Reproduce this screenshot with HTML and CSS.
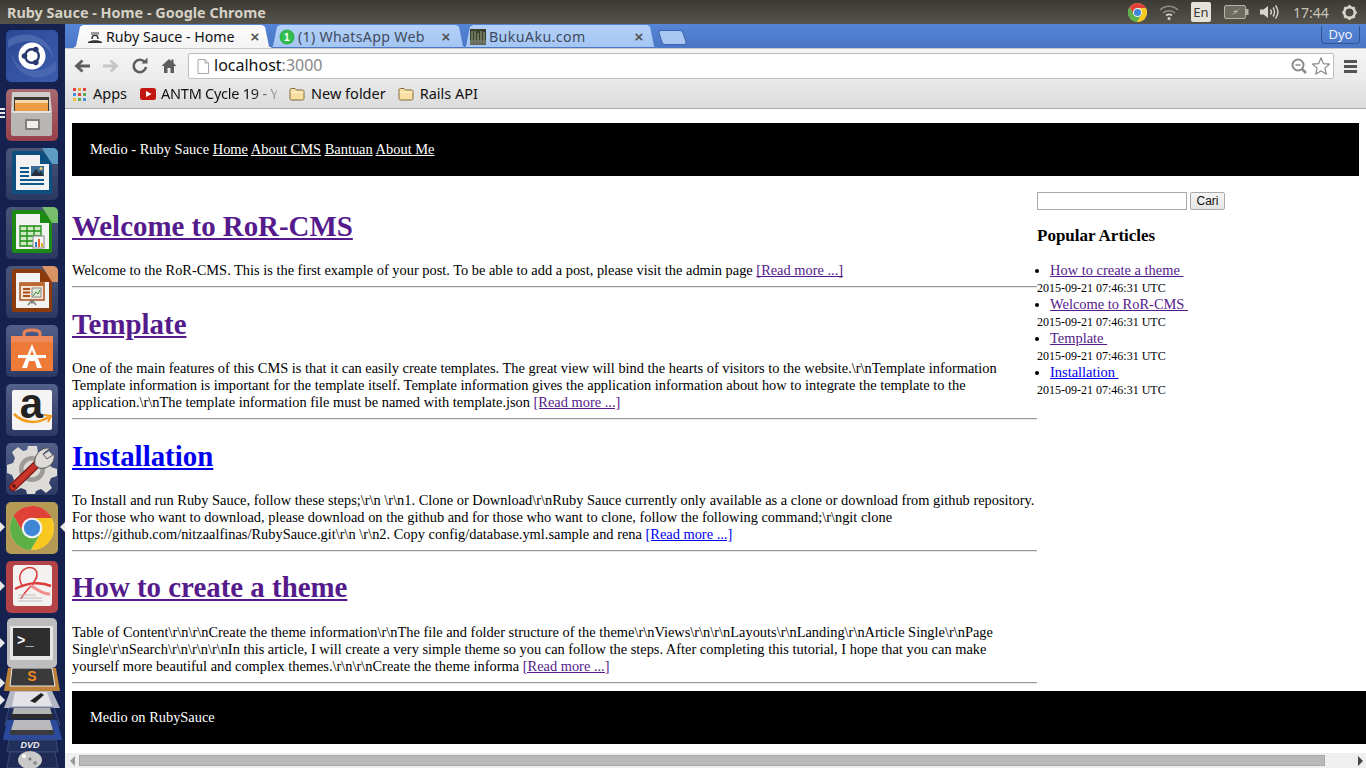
FILE: index.html
```html
<!DOCTYPE html>
<html lang="en">
<head>
<meta charset="utf-8">
<title>Ruby Sauce - Home</title>
<link rel="stylesheet" href="styles.css">
</head>
<body>
<svg class="sprite" aria-hidden="true">
  <symbol id="chrome" viewBox="-1 -1 2 2">
    <circle r="1" fill="#e0e0e0"/>
    <path fill="#df4138" d="M.893-.45A1 1 0 0 0-.836-.548L-.39.225 0-.45Z"/>
    <path fill="#f8c81e" d="M.893-.45A1 1 0 0 1-.057.998L.39.225 0-.45Z"/>
    <path fill="#5cb046" d="M-.057.998A1 1 0 0 1-.836-.548L-.39.225H.39Z"/>
    <circle r=".47" fill="#f4f4f4"/>
    <circle r=".37" fill="#3f86d6"/>
  </symbol>
  <symbol id="folder" viewBox="0 0 16 14">
    <path d="M1 3.200C1 2 1.600 1.500 2.600 1.500H6L7.400 3H13.600C14.500 3 15 3.600 15 4.400V11.600C15 12.500 14.500 13 13.600 13H2.400C1.500 13 1 12.500 1 11.600Z" fill="#f9dfa2" stroke="#7f6a3c"/>
    <path d="M1.600 5.200H14.400" stroke="#fff3cf"/>
  </symbol>
</svg>

<header class="panel">
  <span class="panel-title">Ruby Sauce - Home - Google Chrome</span>
  <div class="indicators">
    <svg class="ind-chrome"><use href="#chrome"/></svg>
    <svg class="ind-wifi" viewBox="0 0 20 16"><g fill="none" stroke="#8f8c83" stroke-width="1.600"><path d="M1 6C6 1 14 1 19 6"/><path d="M4 9C7.500 6 12.500 6 16 9"/></g><path d="M7 11.500C9 10 11 10 13 11.500" fill="none" stroke="#d8d5cc" stroke-width="1.600"/><circle cx="10" cy="14.500" r="1.500" fill="#d8d5cc"/></svg>
    <span class="ind-lang">En</span>
    <svg class="ind-batt" viewBox="0 0 25 14"><rect x=".5" y=".5" width="21" height="13" rx="1.500" fill="#6d6a61" stroke="#b5b2a8"/><rect x="22" y="4" width="2.500" height="6" fill="#b5b2a8"/><path d="M17 3 9 7H12L6 11 14 6.500H11Z" fill="#ecE9e0"/></svg>
    <svg class="ind-vol" viewBox="0 0 20 16"><path d="M0 5.500H3.500L8 2V14L3.500 10.500H0Z" fill="#d8d5cc"/><g fill="none" stroke="#d8d5cc" stroke-width="1.400"><path d="M10.500 5.500C11.500 7 11.500 9 10.500 10.500"/><path d="M13 3.500C15 6 15 10 13 12.500"/><path d="M15.500 1.500C18.500 5.500 18.500 10.500 15.500 14.500"/></g></svg>
    <span class="ind-time">17:44</span>
    <svg class="ind-gear" viewBox="0 0 16 16"><circle cx="8" cy="8" r="5" fill="none" stroke="#d8d5cc" stroke-width="2.400"/><path d="M8 1V15M1 8H15M3 3 13 13M3 13 13 3" stroke="#d8d5cc" stroke-width="2" stroke-dasharray="3 8"/><circle cx="8" cy="8" r="2.800" fill="#4c4a43"/></svg>
  </div>
</header>

<div class="desktop">
  <nav class="launcher">
    <div class="tile tile-bfb">
      <svg viewBox="0 0 52 52"><path d="M2 10C18-2 46 6 48 30 44 14 22 4 2 18Z" fill="#5f7cbd" opacity=".55"/><path d="M50 40C36 54 8 48 5 22 10 40 30 48 50 32Z" fill="#5f7cbd" opacity=".45"/><circle cx="26" cy="26" r="13.500" fill="#fff"/><circle cx="26" cy="26" r="6.800" fill="none" stroke="#27396f" stroke-width="2.400"/><circle cx="18.500" cy="26" r="2.800" fill="#27396f"/><circle cx="29.800" cy="19.500" r="2.800" fill="#27396f"/><circle cx="29.800" cy="32.500" r="2.800" fill="#27396f"/></svg>
    </div>
    <div class="tile tile-files">
      <span class="pip-stack"><i></i><i></i><i></i></span>
      <svg viewBox="0 0 52 52"><path d="M6 3H44L46 23H5Z" fill="#cfcdc9"/><rect x="8" y="8" width="35" height="16" fill="#3b3835"/><rect x="9" y="11" width="33" height="4" fill="#f7d7a6"/><rect x="9" y="14" width="33" height="8" fill="#ed9c45"/><path d="M5 22H46V45C46 46 45 47 44 47H7C6 47 5 46 5 45Z" fill="#b9b7b3"/><path d="M5 22H46L44 24H7Z" fill="#e4e2de"/><rect x="19" y="30" width="15" height="11" rx="1" fill="#7f7d7a"/><rect x="21" y="32" width="11" height="7" fill="#efeeec"/></svg>
    </div>
    <div class="tile tile-office">
      <svg viewBox="0 0 52 52"><path d="M6 5Q6 3 8 3H36L46 13V44Q46 46 44 46H8Q6 46 6 44Z" fill="#0d4f7e"/><path d="M36 0 52 0V16H46Z" fill="#62a4cc" opacity=".9"/><path d="M10 7H34V16H43V42H10Z" fill="#f2f2f2"/><g fill="#10598c"><rect x="14" y="19" width="9" height="2"/><rect x="14" y="23" width="9" height="2"/><rect x="14" y="27" width="9" height="2"/><rect x="14" y="31" width="24" height="2"/><rect x="14" y="35" width="24" height="2"/></g><rect x="25" y="18" width="13" height="10" fill="#3b6d97"/><path d="M25 28 30 21 33 25 35 23 38 28Z" fill="#26303a"/><circle cx="35" cy="20.500" r="1.500" fill="#f0d060"/></svg>
    </div>
    <div class="tile tile-office">
      <svg viewBox="0 0 52 52"><path d="M6 5Q6 3 8 3H36L46 13V44Q46 46 44 46H8Q6 46 6 44Z" fill="#1d8a14"/><path d="M36 0 52 0V16H46Z" fill="#7ccb6c" opacity=".9"/><path d="M10 7H34V16H43V42H10Z" fill="#f2f2f2"/><rect x="14" y="19" width="21" height="20" fill="#cdeac4"/><path d="M14 19H35V39H14ZM14 24H35M14 29H35M14 34H35M21 19V39M28 19V39" fill="none" stroke="#1d8a14" stroke-width="1.300"/><rect x="27" y="29" width="11" height="12" fill="#f3f3f3" stroke="#888"/><rect x="29" y="35" width="2" height="5" fill="#2d79c7"/><rect x="32" y="32" width="2" height="8" fill="#e8662a"/><rect x="35" y="36" width="2" height="4" fill="#e0b020"/></svg>
    </div>
    <div class="tile tile-office">
      <svg viewBox="0 0 52 52"><path d="M6 5Q6 3 8 3H36L46 13V44Q46 46 44 46H8Q6 46 6 44Z" fill="#8d3a0d"/><path d="M36 0 52 0V16H46Z" fill="#e99a63" opacity=".9"/><path d="M10 7H34V16H43V42H10Z" fill="#f2f2f2"/><rect x="14" y="17" width="24" height="17" fill="#f5e3d3" stroke="#a8501c" stroke-width="1.500"/><rect x="14" y="17" width="24" height="3" fill="#bd6a30"/><g fill="#a8501c"><rect x="17" y="22" width="7" height="2"/><rect x="17" y="25.500" width="7" height="2"/><rect x="17" y="29" width="7" height="2"/></g><rect x="26" y="22" width="9" height="9" fill="#dfe6d8" stroke="#666" stroke-width=".7"/><path d="M27 30 30 26 32 28 34 24" stroke="#2f8f2f" fill="none"/><path d="M26 34 22 39M26 34V38M26 34 30 39" stroke="#777" stroke-width="1.300"/></svg>
    </div>
    <div class="tile tile-plain">
      <svg viewBox="0 0 52 52"><path d="M18 15V8C18 4 34 4 34 8V15" fill="none" stroke="#e98457" stroke-width="3"/><path d="M5 11H47V46H5Z" fill="#ee7a3a"/><path d="M5 11H47V17H5Z" fill="#f0895a"/><path d="M26 19 36 43H31L29 36H23L21 43H16Z" fill="#fff"/><path d="M12 30H40V33H12Z" fill="#fff"/><path d="M26 25 24 30H28Z" fill="#ee7a3a"/></svg>
    </div>
    <div class="tile tile-plain">
      <svg viewBox="0 0 52 52"><rect x="6" y="6" width="40" height="40" rx="2" fill="#f5f4f2"/><text x="25.500" y="34" class="amazon-a">a</text><path d="M8 30C18 40 32 40 43 33" fill="none" stroke="#f39a1c" stroke-width="2.500"/><path d="M38 31 45 32 42 38" fill="none" stroke="#f39a1c" stroke-width="2"/></svg>
    </div>
    <div class="tile tile-plain">
      <svg viewBox="0 0 52 52"><path d="M22 3H31L32 10 37 12 43 8 48 14 43 19 45 24 51 26V33L45 35 43 40 46 45 40 50 35 46 30 48 29 51H21L20 47 15 45 9 48 4 42 8 37 6 32 1 30V22L7 20 9 15 6 9 12 4 17 8 21 7Z" fill="#dcdbd7"/><circle cx="26" cy="26" r="13" fill="#9c9b98"/><circle cx="26" cy="26" r="8.500" fill="#dcdbd7"/><path d="M7 44 32 20" stroke="#7c1a14" stroke-width="8" stroke-linecap="round"/><path d="M7 44 32 20" stroke="#c9342b" stroke-width="5.500" stroke-linecap="round"/><path d="M29 22C27 12 35 4 44 5L37 11 41 16 48 11C50 20 41 27 33 25Z" fill="#dedcd8" stroke="#555" stroke-width="1"/><circle cx="8" cy="43" r="1.800" fill="#5b1410"/></svg>
    </div>
    <div class="tile tile-chrome">
      <span class="pip pip-left"></span><span class="pip pip-right"></span>
      <svg viewBox="0 0 52 52"><use href="#chrome" x="4" y="4" width="44" height="44"/></svg>
    </div>
    <div class="tile tile-pdf">
      <span class="pip pip-left"></span>
      <svg viewBox="0 0 52 52"><rect x="7" y="4" width="39" height="41" rx="3" fill="#f3f2f0"/><g fill="none" stroke="#d93a3a"><path d="M17 26C5 8 30 0 31 13 32 21 18 30 15 38" stroke-width="1.500"/><path d="M9 28C22 21 36 21 45 25" stroke-width="2.500"/><path d="M24 24C30 28 38 34 44 33" stroke-width="3" stroke="#f08c8c"/></g><g stroke="#bdbdbd"><path d="M12 34H30M12 37H36M12 40H36"/></g></svg>
    </div>
    <div class="tile tile-term">
      <span class="pip pip-left"></span>
      <svg viewBox="0 0 52 50"><rect x="1" y="0" width="50" height="50" rx="5" fill="#bdbdbd"/><rect x="4" y="8" width="43" height="34" rx="1" fill="#e6e6e6"/><rect x="7" y="10" width="37" height="28" fill="#2e2e2e"/><text x="11" y="27" class="prompt">&gt;_</text></svg>
    </div>
    <div class="fold">
      <span class="pip pip-left pip-a"></span><span class="pip pip-left pip-b"></span>
      <svg viewBox="0 0 65 100">
        <path d="M8 0H56L60 23H4Z" fill="#bd8238"/>
        <path d="M12 0H52L55 18H10Z" fill="#3a3a3a" stroke="#e8e8e8"/>
        <text x="32" y="13" class="sublime">S</text>
        <path d="M10 23H52L60 40H4Z" fill="#b4b7c4"/>
        <path d="M15 24H47L52 38H12Z" fill="#e3e3e8"/>
        <path d="M30 33 41 25 44 27 35 35Z" fill="#222"/>
        <path d="M9 40H54L60 57H5Z" fill="#1c2a58" stroke="#3a4a78"/>
        <path d="M14 40H50L53 50H11Z" fill="#b4b4b4"/><path d="M11 46H53V51H11Z" fill="#2c2c2c"/>
        <path d="M7 52H57L62 72H3Z" fill="#2b4a9c"/>
        <path d="M14 52H50L54 66H10Z" fill="#b9b9bd"/><path d="M10 62H54V67H10Z" fill="#3a3a40"/>
        <path d="M9 72H56L58 84H7Z" fill="#22305e" stroke="#3a4a78"/>
        <text x="30" y="80" class="dvd">DVD</text>
        <path d="M10 84H55L58 100H7Z" fill="#1f2b55" stroke="#3a4a78"/>
        <ellipse cx="30" cy="92" rx="12" ry="9" fill="#c9c9c9"/><circle cx="24" cy="88" r="2" fill="#fff"/><circle cx="35" cy="95" r="2" fill="#8f8f8f"/><circle cx="30" cy="91" r="1.500" fill="#777"/>
      </svg>
    </div>
  </nav>

  <section class="browser">
    <div class="tabstrip">
      <div class="tabs">
        <div class="tab tab-a">
          <svg class="favicon" viewBox="0 0 16 16"><path d="M1 13C4 10.500 12 10.500 15 13V14H1Z" fill="#333"/><path d="M5 10C5 5 11 5 11 10" fill="none" stroke="#333" stroke-width="1.500"/><path d="M4 3H12V6H4Z" fill="#999"/></svg>
          <span class="tab-title">Ruby Sauce - Home</span><span class="tab-x">×</span>
        </div>
        <div class="tab tab-b">
          <svg class="favicon" viewBox="0 0 16 16"><circle cx="8" cy="8" r="7.500" fill="#2fb34a"/><circle cx="8" cy="8" r="6" fill="#32c050"/><text x="8" y="12" class="wa">1</text></svg>
          <span class="tab-title">(1) WhatsApp Web</span><span class="tab-x">×</span>
        </div>
        <div class="tab tab-c">
          <svg class="favicon" viewBox="0 0 16 16"><rect width="16" height="16" fill="#39402e"/><path d="M2 2V14M5 2V14M8 4V14M11 2V14M14 3V14" stroke="#8f9a76" stroke-width="1.200"/><path d="M0 11H16V16H0Z" fill="#767a70" opacity=".7"/></svg>
          <span class="tab-title">BukuAku.com</span><span class="tab-x">×</span>
        </div>
        <div class="newtab"></div>
      </div>
      <span class="profile">Dyo</span>
    </div>

    <div class="toolbar">
      <svg class="tool" viewBox="0 0 18 18"><path d="M17 9H5M9.500 3.500 3.500 9 9.500 14.500" fill="none" stroke="#5d5d5d" stroke-width="2.800"/></svg>
      <svg class="tool tool-fwd" viewBox="0 0 18 18"><path d="M1 9H13M8.500 3.500 14.500 9 8.500 14.500" fill="none" stroke="#c6c6c6" stroke-width="2.800"/></svg>
      <svg class="tool tool-reload" viewBox="0 0 18 18"><path d="M14 5.500A6.200 6.200 0 1 0 15 10" fill="none" stroke="#5d5d5d" stroke-width="2.600"/><path d="M10.500 6.500H16.500V0.500Z" fill="#5d5d5d"/></svg>
      <svg class="tool tool-home" viewBox="0 0 18 18"><path d="M9 2 1.500 9H4V16H7.500V11H10.500V16H14V9H16.500L13.500 6V2.500H11.500V4.200Z" fill="#5d5d5d"/></svg>
      <div class="omnibox">
        <svg class="page-icon" viewBox="0 0 12 15"><path d="M1 .5H8L11.500 4V14.500H1Z" fill="#fff" stroke="#a8a8a8"/><path d="M8 .5V4H11.500" fill="#e4e4e4" stroke="#a8a8a8"/></svg>
        <span class="url">localhost<span class="url-dim">:3000</span></span>
        <svg class="zoom-icon" viewBox="0 0 16 16"><circle cx="7" cy="7" r="5.500" fill="none" stroke="#8a8a8a" stroke-width="2"/><path d="M4.500 7H9.500" stroke="#8a8a8a" stroke-width="1.500"/><path d="M11 11 15 15" stroke="#8a8a8a" stroke-width="2.500"/></svg>
        <svg class="star-icon" viewBox="0 0 18 18"><path d="M9 1 11.400 6.600 17.500 7.100 12.900 11.100 14.300 17 9 13.900 3.700 17 5.100 11.100 .5 7.100 6.600 6.600Z" fill="#fff" stroke="#8a8a8a" stroke-width="1.200"/></svg>
      </div>
      <div class="menu"><i></i><i></i><i></i></div>
    </div>

    <div class="bookmarks">
      <div class="bm">
        <svg class="apps" viewBox="0 0 13 13"><g><rect width="3" height="3" fill="#e0433a"/><rect x="5" width="3" height="3" fill="#e8a23a"/><rect x="10" width="3" height="3" fill="#e0433a"/><rect y="5" width="3" height="3" fill="#4a8fdc"/><rect x="5" y="5" width="3" height="3" fill="#e0433a"/><rect x="10" y="5" width="3" height="3" fill="#58b050"/><rect y="10" width="3" height="3" fill="#f0c030"/><rect x="5" y="10" width="3" height="3" fill="#58b050"/><rect x="10" y="10" width="3" height="3" fill="#4a8fdc"/></g></svg>
        <span>Apps</span>
      </div>
      <div class="bm bm-yt">
        <svg class="yt" viewBox="0 0 16 12"><rect width="16" height="12" rx="2.500" fill="#c3160f"/><path d="M6 3 11.500 6 6 9Z" fill="#fff"/></svg>
        <span class="fade">ANTM Cycle 19 - Y</span>
      </div>
      <div class="bm"><svg class="bm-folder"><use href="#folder"/></svg><span>New folder</span></div>
      <div class="bm"><svg class="bm-folder"><use href="#folder"/></svg><span>Rails API</span></div>
    </div>

    <div class="viewport">
      <div class="site">
        <div class="site-head">Medio - Ruby Sauce <a href="#h" class="link-w">Home</a> <a href="#a" class="link-w">About CMS</a> <a href="#b" class="link-w">Bantuan</a> <a href="#m" class="link-w">About Me</a></div>
        <div class="columns">
          <main class="articles">
            <h1><a href="#1" class="seen">Welcome to RoR-CMS</a></h1>
            Welcome to the RoR-CMS. This is the first example of your post. To be able to add a post, please visit the admin page <a href="#1" class="seen">[Read more ...]</a>
            <hr>
            <h1><a href="#2" class="seen">Template</a></h1>
            One of the main features of this CMS is that it can easily create templates. The great view will bind the hearts of visitors to the website.\r\nTemplate information Template information is important for the template itself. Template information gives the application information about how to integrate the template to the application.\r\nThe template information file must be named with template.json <a href="#2" class="seen">[Read more ...]</a>
            <hr>
            <h1><a href="#3" class="fresh">Installation</a></h1>
            To Install and run Ruby Sauce, follow these steps;\r\n \r\n1. Clone or Download\r\nRuby Sauce currently only available as a clone or download from github repository. For those who want to download, please download on the github and for those who want to clone, follow the following command;\r\ngit clone https://github.com/nitzaalfinas/RubySauce.git\r\n \r\n2. Copy config/database.yml.sample and rena <a href="#3" class="fresh">[Read more ...]</a>
            <hr>
            <h1><a href="#4" class="seen">How to create a theme</a></h1>
            Table of Content\r\n\r\nCreate the theme information\r\nThe file and folder structure of the theme\r\nViews\r\n\r\nLayouts\r\nLanding\r\nArticle Single\r\nPage Single\r\nSearch\r\n\r\n\r\nIn this article, I will create a very simple theme so you can follow the steps. After completing this tutorial, I hope that you can make yourself more beautiful and complex themes.\r\n\r\nCreate the theme informa <a href="#4" class="seen">[Read more ...]</a>
            <hr>
          </main>
          <aside class="side">
            <form class="search"><input class="search-input" type="text" aria-label="Search"> <button class="search-btn" type="button">Cari</button></form>
            <h3>Popular Articles</h3>
            <ul>
              <li><a href="#4" class="seen">How to create a theme&nbsp;</a></li>
            </ul>
            <small>2015-09-21 07:46:31 UTC</small>
            <ul>
              <li><a href="#1" class="seen">Welcome to RoR-CMS&nbsp;</a></li>
            </ul>
            <small>2015-09-21 07:46:31 UTC</small>
            <ul>
              <li><a href="#2" class="seen">Template&nbsp;</a></li>
            </ul>
            <small>2015-09-21 07:46:31 UTC</small>
            <ul>
              <li><a href="#3" class="fresh">Installation&nbsp;</a></li>
            </ul>
            <small>2015-09-21 07:46:31 UTC</small>
          </aside>
        </div>
        <footer class="site-foot">Medio on RubySauce</footer>
      </div>
    </div>

    <div class="hscroll">
      <span class="arrow arrow-l"></span>
      <div class="thumb"></div>
      <span class="arrow arrow-r"></span>
    </div>
  </section>
</div>
</body>
</html>
```

FILE: styles.css
```css
* { box-sizing: border-box; }
html, body { margin: 0; padding: 0; height: 100%; overflow: hidden; }
body { width: 1366px; height: 768px; display: flex; flex-direction: column; font-family: "Liberation Serif", serif; background: #fff; }
.sprite { width: 0; height: 0; position: absolute; }
svg { display: block; flex: none; }

.panel { height: 24px; flex: none; display: flex; align-items: center; justify-content: space-between; background: linear-gradient(#3c3a35, #56534b); }
.panel-title { margin-left: 7px; font: 700 14.4px "Noto Sans", sans-serif; color: #d6d1c5; }
.indicators { display: flex; align-items: center; height: 24px; }
.ind-chrome { width: 19px; height: 19px; margin-right: 12px; }
.ind-wifi { width: 20px; height: 16px; margin-right: 12px; }
.ind-lang { width: 20px; height: 20px; margin-right: 13px; border-radius: 2px; background: #e6e2da; color: #3a3834; font: 13px/20px "Noto Sans", sans-serif; text-align: center; }
.ind-batt { width: 25px; height: 14px; margin-right: 11px; }
.ind-vol { width: 20px; height: 16px; margin-right: 13px; }
.ind-time { width: 36px; margin-right: 12px; font: 14px "Noto Sans", sans-serif; color: #c9c4b6; }
.ind-gear { width: 17px; height: 17px; margin-right: 8px; }

.desktop { flex: 1; display: flex; min-height: 0; }

.launcher { width: 65px; flex: none; display: flex; flex-direction: column; gap: 7px; padding: 6px 0 0 6px; background: #15224f; overflow: hidden; }
.tile { position: relative; width: 52px; height: 52px; flex: none; border-radius: 5px; background: linear-gradient(#48557f, #28355f); }
.tile svg { width: 52px; height: 52px; }
.tile-bfb { background: linear-gradient(135deg, #2c4894, #3c5cae); }
.tile-files { background: linear-gradient(#a86a70, #98404a); }
.tile-office { background: linear-gradient(#4a5678, #2b3861); overflow: hidden; }
.tile-plain { background: linear-gradient(#52608a, #2b3963); }
.tile-chrome { background: #b49a52; }
.tile-pdf { background: #b34347; }
.tile-term { height: 50px; margin-top: -2px; background: transparent; }
.tile-term svg { height: 50px; }
.pip { position: absolute; width: 0; height: 0; border-style: solid; border-width: 5px 0 5px 5px; border-color: transparent transparent transparent #e8e8e8; left: -6px; top: 20px; }
.pip-right { left: auto; right: -7px; border-width: 5px 5px 5px 0; border-color: transparent #e8e8e8 transparent transparent; }
.pip-a { left: 0; top: 10px; z-index: 2; }
.pip-b { left: 0; top: 27px; z-index: 2; }
.pip-stack { position: absolute; left: -6px; top: 19px; display: flex; flex-direction: column; gap: 2px; }
.pip-stack i { display: block; width: 5px; height: 2px; background: #e8e8e8; }
.fold { position: relative; width: 65px; height: 100px; flex: none; margin: -7px 0 0 -6px; }
.fold svg { width: 65px; height: 100px; }
.amazon-a { font: 700 42px "Liberation Sans", sans-serif; fill: #222; text-anchor: middle; }
.sublime { font: 700 14px "Liberation Sans", sans-serif; fill: #f08a24; text-anchor: middle; }
.dvd { font: italic 700 9px "Liberation Sans", sans-serif; fill: #eee; text-anchor: middle; }
.wa { font: 700 10px "Liberation Sans", sans-serif; fill: #fff; text-anchor: middle; }
.prompt { font: 700 14px "Liberation Mono", monospace; fill: #fff; }

.browser { flex: 1; min-width: 0; display: flex; flex-direction: column; }

.tabstrip { height: 24px; flex: none; display: flex; justify-content: space-between; align-items: flex-start; padding: 1px 6px 0 8px; background: linear-gradient(#5684d6, #4a76c6); }
.tabs { display: flex; height: 23px; align-items: flex-start; }
.tab { height: 23px; display: flex; align-items: center; background: linear-gradient(#b3d0f8, #a4c6f3); box-shadow: inset 0 -1px #4c78c4; clip-path: polygon(0 100%, 3px 92%, 7px 8%, 10px 0, calc(100% - 10px) 0, calc(100% - 7px) 8%, calc(100% - 3px) 92%, 100% 100%); font: 14.2px "Noto Sans", sans-serif; color: #3f4a5e; }
.tab-a { width: 199px; margin-right: -2px; padding: 0 12px 0 14px; background: linear-gradient(#fcfcfc, #f4f4f4); box-shadow: none; color: #111; position: relative; z-index: 1; }
.tab-b { width: 196px; margin-right: -3px; padding: 0 15px 0 9px; letter-spacing: .3px; }
.tab-c { width: 194px; padding: 0 13px 0 7px; letter-spacing: .4px; }
.favicon { width: 16px; height: 16px; margin-right: 3px; }
.tab-title { flex: 1; white-space: nowrap; overflow: hidden; }
.tab-x { width: 10px; font: 700 15px/16px "Liberation Sans", sans-serif; color: #555; text-align: center; }
.newtab { width: 25px; height: 15px; margin: 5px 0 0 3px; border-radius: 3px; background: #a9c7f2; border: 1px solid #3c66ad; transform: skewX(18deg); }
.profile { width: 39px; height: 18px; margin-top: 1px; border: 1px solid #33548f; border-top: 0; border-radius: 0 0 4px 4px; color: #eef2fa; font: 13px/17px "Noto Sans", sans-serif; text-align: center; }

.toolbar { height: 32px; flex: none; display: flex; align-items: center; padding: 4px 0 1px 8px; background: linear-gradient(#f4f4f4, #ececec); border-top: 1px solid #c4c8d0; }
.tool { width: 18px; height: 18px; margin-right: 11px; }
.tool-home { margin-right: 10px; }
.omnibox { width: 1146px; height: 26px; display: flex; align-items: center; padding: 0 3px 0 8px; background: #fff; border: 1px solid #bdbdbd; border-radius: 2px; }
.page-icon { width: 12px; height: 15px; margin-right: 5px; }
.url { flex: 1; padding-bottom: 2px; font: 16px "Noto Sans", sans-serif; color: #111; }
.url-dim { color: #888; }
.zoom-icon { width: 16px; height: 16px; margin-right: 5px; }
.star-icon { width: 18px; height: 18px; }
.menu { width: 13px; margin-left: 10px; display: flex; flex-direction: column; gap: 2px; }
.menu i { display: block; height: 3px; background: #555; }

.bookmarks { height: 29px; flex: none; display: flex; align-items: center; padding: 0 0 0 8px; background: linear-gradient(#e9e9e9, #dcdcdc); border-bottom: 1px solid #a8a8a8; font: 14.5px "Noto Sans", sans-serif; color: #111; }
.bm { display: flex; align-items: center; white-space: nowrap; margin-right: 12px; }
.bm span { padding-bottom: 2px; }
.apps { width: 13px; height: 13px; margin-right: 7px; }
.yt { width: 16px; height: 12px; margin-right: 5px; }
.bm-folder { width: 16px; height: 14px; margin-right: 6px; }
.bm-yt { width: 137px; margin-left: 1px; }
.fade { display: block; width: 118px; letter-spacing: -.25px; overflow: hidden; -webkit-mask-image: linear-gradient(90deg, #000 78%, rgba(0,0,0,.25)); mask-image: linear-gradient(90deg, #000 78%, rgba(0,0,0,.25)); }

.viewport { flex: 1; min-height: 0; overflow: hidden; background: #fff; }
.site { padding: 14px 0 0 7px; width: 1294px; font-size: 14.4px; line-height: 17px; color: #000; }
.site-head { height: 53px; padding: 18px; background: #000; color: #fff; font-size: 14.45px; }
.link-w { color: #fff; }
.seen { color: #551a8b; }
.fresh { color: #00e; }
.columns { display: flex; margin-top: 14.75px; }
.articles { width: 965px; flex: none; }
.articles h1 { font-size: 28.9px; line-height: 33px; margin: 19.4px 0 19.3px; font-weight: 700; }
.articles hr { margin: 7px 0 0; height: 2px; border: 0; border-top: 1px solid #9a9a9a; border-bottom: 1px solid #e8e8e8; }
.side { flex: 1; padding-top: 1.25px; }
.search { display: flex; align-items: flex-start; gap: 3px; height: 18px; }
.search-input { width: 150px; height: 18px; padding: 0; border: 1px solid #a9a9a9; background: #fff; }
.search-btn { width: 35px; height: 18px; padding: 0; border: 1px solid #a9a9a9; border-radius: 2px; background: linear-gradient(#f6f6f6, #e4e4e4); color: #111; font: 12px "Liberation Sans", sans-serif; }
.side h3 { margin: 16px 0 17px; font-size: 17px; line-height: 19px; font-weight: 700; }
.side ul { margin: 0; padding: 0 0 0 13px; font-size: 14.45px; }
.side small { display: block; height: 17px; padding-top: 1px; font-size: 12px; line-height: 16px; }
.site-foot { width: 1300px; height: 53px; margin-top: 7.45px; padding: 18px; background: #000; color: #fff; }

.hscroll { height: 15px; flex: none; display: flex; align-items: center; background: #efefef; }
.arrow { width: 0; height: 0; border-style: solid; }
.arrow-l { margin-left: 5px; border-width: 5px 5px 5px 0; border-color: transparent #9a9a9a transparent transparent; }
.thumb { width: 1246px; height: 11px; margin-left: 4px; background: #b9b9b9; border: 1px solid #a8a8a8; }
.arrow-r { margin-left: 33px; border-width: 5px 0 5px 5px; border-color: transparent transparent transparent #444; }
```
